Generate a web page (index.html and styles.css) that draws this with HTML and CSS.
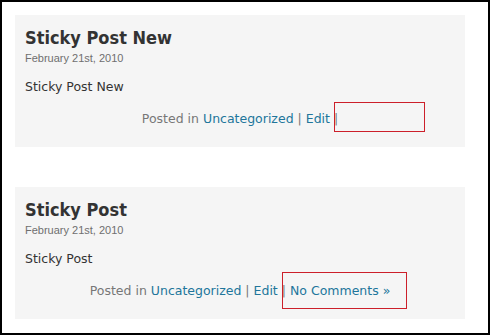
FILE: index.html
```html
<!DOCTYPE html>
<html lang="en">
<head>
    <meta charset="UTF-8">
    <title>Sticky Posts</title>
    <link rel="stylesheet" href="styles.css">
</head>
<body>

<div class="frame">
    <!-- First post -->
    <div class="post">
        <h2>Sticky Post New</h2>
        <div class="date">February 21st, 2010</div>
        <p class="entry">Sticky Post New</p>
        <p class="postmetadata">Posted in <a href="#">Uncategorized</a> | <a href="#">Edit</a> |</p>
        <div class="mark mark-one"></div>
    </div>

    <!-- Second post -->
    <div class="post">
        <h2>Sticky Post</h2>
        <div class="date">February 21st, 2010</div>
        <p class="entry">Sticky Post</p>
        <p class="postmetadata">Posted in <a href="#">Uncategorized</a> | <a href="#">Edit</a> | <a href="#">No Comments &raquo;</a></p>
        <div class="mark mark-two"></div>
    </div>
</div>

</body>
</html>
```

FILE: styles.css
```css
body {
    margin: 0;
    background-color: #ffffff;
    font-family: 'DejaVu Sans', Verdana, sans-serif;
    color: #333;
}
.frame {
    width: 490px;
    height: 335px;
    box-sizing: border-box;
    border: 2px solid #000;
    padding: 13px;
}
.post {
    position: relative;
    width: 450px;
    height: 132px;
    box-sizing: border-box;
    padding: 12px 10px 0;
    background-color: #f5f5f5;
}
.post + .post {
    margin-top: 40px;
}
h2 {
    margin: 0;
    font-family: 'DejaVu Sans Condensed', 'DejaVu Sans', sans-serif;
    font-stretch: condensed;
    font-size: 18px;
    line-height: 22px;
    font-weight: bold;
    color: #333;
}
.date {
    margin-top: 2px;
    font-family: 'Liberation Sans', Arial, sans-serif;
    font-size: 11px;
    line-height: 14px;
    color: #6f6f6f;
}
.entry {
    margin: 14px 0 0;
    font-size: 12.5px;
    line-height: 16px;
}
.postmetadata {
    margin: 16px 0 0;
    font-size: 12.5px;
    line-height: 16px;
    text-align: center;
    color: #777;
}
.postmetadata a {
    color: #21759b;
    text-decoration: none;
}
/* red highlight boxes drawn over the screenshot */
.mark {
    position: absolute;
    box-sizing: border-box;
    border: 1px solid #cc1f2a;
}
.mark-one {
    left: 319px;
    top: 87px;
    width: 91px;
    height: 30px;
}
.mark-two {
    left: 267px;
    top: 85px;
    width: 125px;
    height: 37px;
}
```
